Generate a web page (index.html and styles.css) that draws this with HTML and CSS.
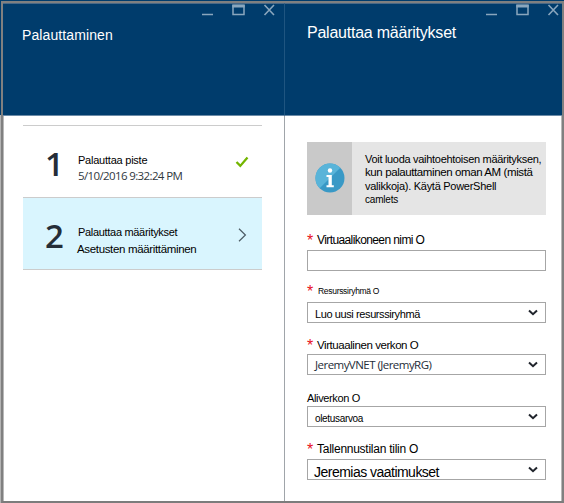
FILE: index.html
```
<!DOCTYPE html>
<html lang="fi">
<head>
<meta charset="utf-8">
<title>Palauttaminen</title>
<link rel="stylesheet" href="styles.css">
</head>
<body>
<svg class="defs" width="0" height="0" aria-hidden="true">
  <symbol id="window" viewBox="0 0 74 14">
    <path d="M0 10.500h11" stroke="currentColor" stroke-width="1.5"/>
    <path d="M31 1.500h11v9h-11z" fill="none" stroke="currentColor" stroke-width="1.5"/>
    <path d="M30.3 2h12.4" stroke="currentColor" stroke-width="3"/>
    <path d="M62.500 1l9.5 10M72 1L62.500 11" stroke="currentColor" stroke-width="1.6"/>
  </symbol>
  <symbol id="caret" viewBox="0 0 10 7">
    <path d="M1 1.500L5 5.200L9 1.500" fill="none" stroke="#20242c" stroke-width="2"/>
  </symbol>
</svg>
<main class="frame">
  <section class="blade blade-left">
    <header class="head">
      <svg class="win" width="74" height="14"><use href="#window"/></svg>
      <h1 class="title-small">Palauttaminen</h1>
    </header>
    <ol class="steps">
      <li class="step">
        <span class="num">1</span>
        <div class="text"><p class="name">Palauttaa piste</p><p class="date">5/10/2016 9:32:24 PM</p></div>
        <svg class="mark" width="14" height="12" viewBox="0 0 14 12"><path d="M1.500 6l3.800 3.900L12.500 1.500" fill="none" stroke="#73b500" stroke-width="2.300"/></svg>
      </li>
      <li class="step active">
        <span class="num">2</span>
        <div class="text"><p class="name tight">Palauttaa määritykset</p><p class="desc">Asetusten määrittäminen</p></div>
        <svg class="mark" width="14" height="14" viewBox="0 0 14 14"><path d="M4 .8l6.400 6.200L4 13.200" fill="none" stroke="#4c5b64" stroke-width="1.200"/></svg>
      </li>
    </ol>
  </section>
  <section class="blade blade-right">
    <header class="head">
      <svg class="win" width="74" height="14"><use href="#window"/></svg>
      <h2 class="title-large">Palauttaa määritykset</h2>
    </header>
    <form class="form">
      <div class="info">
        <div class="info-side">
          <svg width="30" height="30" viewBox="0 0 30 30"><circle cx="15" cy="15" r="14.500" fill="#3999c6"/><path d="M4.700 25.300A14.500 14.500 0 0 1 25.300 4.700z" fill="#59b4d9"/><circle cx="15" cy="7.500" r="2.200" fill="#fff"/><path d="M11.500 12h5.300v10.300h2v1.900h-7.300v-1.900h2v-8.400h-2z" fill="#fff"/></svg>
        </div>
        <div class="info-text"><p class="i1">Voit luoda vaihtoehtoisen määrityksen,</p><p class="i2">kun palauttaminen oman AM (mistä</p><p class="i3">valikkoja). Käytä PowerShell</p><p class="i4">camlets</p></div>
      </div>
      <div class="label l1"><b>*</b><span>Virtuaalikoneen nimi O</span></div>
      <div class="box"></div>
      <div class="label l2"><b>*</b><span>Resurssiryhmä O</span></div>
      <div class="box"><span class="v2">Luo uusi resurssiryhmä</span><svg width="10" height="7"><use href="#caret"/></svg></div>
      <div class="label l3"><b>*</b><span>Virtuaalinen verkon O</span></div>
      <div class="box"><span class="v3">JeremyVNET (JeremyRG)</span><svg width="10" height="7"><use href="#caret"/></svg></div>
      <div class="label l4"><span>Aliverkon O</span></div>
      <div class="box"><span class="v4">oletusarvoa</span><svg width="10" height="7"><use href="#caret"/></svg></div>
      <div class="label l5"><b>*</b><span>Tallennustilan tilin O</span></div>
      <div class="box"><span class="v5">Jeremias vaatimukset</span><svg width="10" height="7"><use href="#caret"/></svg></div>
    </form>
  </section>
</main>
</body>
</html>
```
FILE: styles.css
```
* { box-sizing: border-box; }
html, body, h1, h2, p, ol, form { margin: 0; padding: 0; }
body {
  width: 564px;
  height: 503px;
  overflow: hidden;
  background: linear-gradient(#003c6c 115px, #b4b4b4 115px);
  padding: 1px 0 0 1px;
  font: 11px/16px "Liberation Sans", sans-serif;
  color: #000;
  white-space: nowrap;
}
.defs { display: block; }
.frame {
  display: flex;
  width: 563px;
  height: 502px;
  border: 2px solid #808080;
  border-bottom-color: #7c7c7c;
  background: #fff;
}
.blade { display: flex; flex-direction: column; }
.blade-left { width: 281px; border-left: 1px solid #b8b8b8; }
.blade-right { flex: 1; border-left: 1px solid #a0a5aa; border-right: 1px solid #b8b8b8; }
.head {
  height: 113px;
  background: #003c6c;
  border-top: 1px solid #496987;
  border-bottom: 1px solid #6c8ba7;
  color: #fff;
  display: flex;
  flex-direction: column;
}
.blade-left .head { margin-left: -1px; padding-left: 19px; }
.blade-right .head { margin: 0 -1px; padding-left: 22px; border-left: 1px solid #1f5580; }
.win { color: #8aa6bd; align-self: flex-end; flex: none; }
.blade-left .win { margin-right: 8px; }
.blade-right .win { margin-right: 2px; }
h1, h2 { font-weight: 400; line-height: 20px; }
.title-small { font-size: 14px; letter-spacing: .1px; margin-top: 7px; }
.title-large { font-size: 16px; letter-spacing: -.23px; margin-top: 5px; }
.steps {
  list-style: none;
  margin: 9px 22px 0 19px;
  border-top: 1px solid #ccc;
}
.step {
  display: flex;
  height: 72px;
  border-bottom: 1px solid #ccc;
  padding: 0 13px 0 22px;
}
.active { background: #d9f5fe; }
.num {
  width: 33px;
  font: 600 33px/76px "Open Sans", sans-serif;
  color: #252d38;
}
.text { flex: 1; padding-top: 26px; }
.name { letter-spacing: -.23px; }
.tight { letter-spacing: -.31px; }
.date { font: 11.5px/16px "Open Sans", sans-serif; letter-spacing: -.62px; color: #303840; }
.desc { font-size: 11.5px; letter-spacing: -.34px; margin-left: -1px; margin-top: 1px; }
.mark { margin-top: 30px; flex: none; }
.form { padding: 26px 15px 0 22px; }
.info { display: flex; height: 73px; background: #e5e5e5; }
.info-side { width: 45px; background: #c9c9c9; padding: 21px 0 0 8px; }
.info-text { padding: 10px 0 0 13px; line-height: 14px; }
.i1 { letter-spacing: -.3px; }
.i2 { font-size: 11.5px; letter-spacing: -.4px; line-height: 13px; }
.i3 { letter-spacing: -.27px; }
.i4 { font-size: 10px; letter-spacing: -.2px; line-height: 13px; }
.label { display: flex; height: 16px; }
.label b { width: 10px; color: #e81123; font: 16px/17px "Liberation Sans", sans-serif; }
.l1 { margin: 17px 0 2px; font-size: 12px; letter-spacing: -.6px; }
.l2 { margin: 12px 0 3px; font-size: 8.500px; letter-spacing: -.3px; }
.l2 span { margin-left: 1px; }
.l3 { margin: 14px 0 1px; font-size: 11.5px; letter-spacing: -.43px; }
.l4 { margin: 15px 0 0; letter-spacing: -.36px; }
.l5 { margin: 14px 0 2px; font-size: 12px; letter-spacing: -.26px; }
.box {
  display: flex;
  height: 21px;
  border: 1px solid #a6a6a6;
  padding: 0 7px;
  justify-content: space-between;
  line-height: 19px;
}
.box svg { margin-top: 6px; }
.v2 { padding-top: 2px; letter-spacing: -.4px; }
.v3 { font-family: "Open Sans", sans-serif; font-size: 11.5px; letter-spacing: -.54px; color: #252d38; }
.v4 { padding-top: 2px; font-size: 10px; letter-spacing: -.33px; }
.v5 { padding-top: 3px; font-size: 14px; letter-spacing: -.52px; margin-left: -1px; }
```
